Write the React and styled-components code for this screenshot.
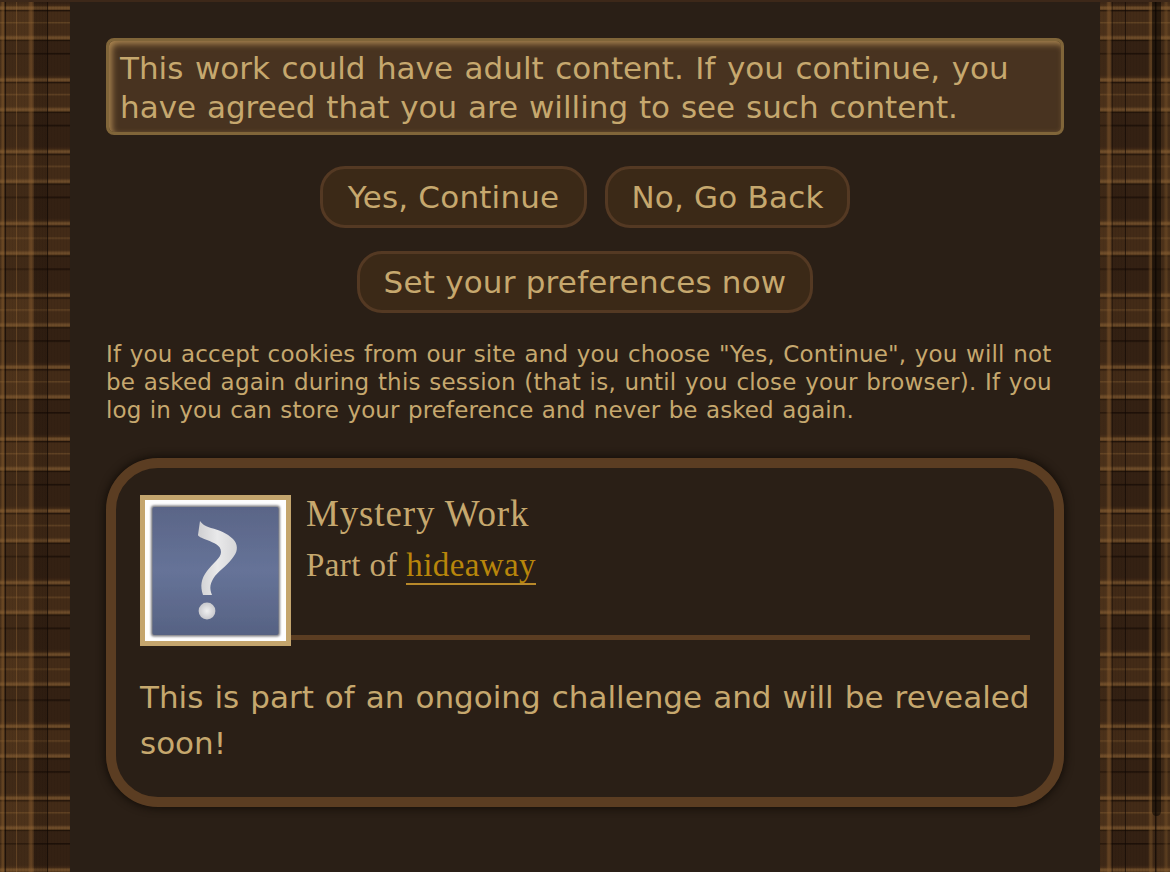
import React from 'react'
import styled, { createGlobalStyle } from 'styled-components'

const GlobalStyle = createGlobalStyle`
    * {
        box-sizing: border-box;
    }
    body {
        margin: 0;
        background: #352012;
        overflow: hidden;
    }
    p, h2, h3 {
        margin: 0;
        font-weight: 400;
    }
`

function App() {
    return (
        <Page>
            <GlobalStyle/>
            <Plaid/>
            <Main>
                <Notice>
                    <Line $word={1.7}>This work could have adult content. If you continue, you</Line>
                    <Line $word={1}>have agreed that you are willing to see such content.</Line>
                </Notice>
                <Actions>
                    <Button $width={267}>Yes, Continue</Button>
                    <Button $width={245}>No, Go Back</Button>
                    <Button $width={456}>Set your preferences now</Button>
                </Actions>
                <Footnote>
                    <Line $word={1} $letter={0.17}>If you accept cookies from our site and you choose "Yes, Continue", you will not</Line>
                    <Line $word={1} $letter={0.21}>be asked again during this session (that is, until you close your browser). If you</Line>
                    <Line $word={1} $letter={0.1}>log in you can store your preference and never be asked again.</Line>
                </Footnote>
                <Work>
                    <Header>
                        <Mystery/>
                        <Heading>
                            <Title>Mystery Work</Title>
                            <Part>Part of <a href="#hideaway">hideaway</a></Part>
                        </Heading>
                    </Header>
                    <Summary>
                        <Line $word={1.2}>This is part of an ongoing challenge and will be revealed</Line>
                        <Line>soon!</Line>
                    </Summary>
                </Work>
            </Main>
            <Plaid $right/>
            <Scrollbar/>
        </Page>
    )
}

function Mystery() {
    return (
        <Icon>
            <svg width="141" height="141" viewBox="0 0 141 141">
                <defs>
                    <linearGradient id="sky" x1="0" y1="0" x2="0" y2="1">
                        <stop offset="0" stopColor="#5a6587"/>
                        <stop offset=".5" stopColor="#667398"/>
                        <stop offset="1" stopColor="#566283"/>
                    </linearGradient>
                    <linearGradient id="mark" x1="0" y1="0" x2="1" y2="0">
                        <stop offset="0" stopColor="#cfcfd1"/>
                        <stop offset=".5" stopColor="#e9e9ea"/>
                        <stop offset="1" stopColor="#d6d6d8"/>
                    </linearGradient>
                    <radialGradient id="dot">
                        <stop offset="0" stopColor="#f0f0f0"/>
                        <stop offset="1" stopColor="#c9c9cd"/>
                    </radialGradient>
                    <filter id="edge">
                        <feGaussianBlur stdDeviation="1.1"/>
                    </filter>
                    <filter id="soft">
                        <feGaussianBlur stdDeviation=".6"/>
                    </filter>
                </defs>
                <rect width="141" height="141" fill="#fefefe"/>
                <rect x="6" y="5.500" width="129" height="131" rx="3" fill="#77777c" filter="url(#edge)"/>
                <rect x="7.500" y="7" width="126" height="128" rx="2" fill="url(#sky)" filter="url(#soft)"/>
                <path d="M55 21 C57 24 60 26 66 28 C74 30 82 33 88 39 C93 44 93 51 89 56 C84 64 76 69 70 76 C65 83 64 88 67 95 L58 95 C55 86 56 79 62 71 C68 63 76 58 76 52 C76 45 69 43 62 40 C56 38 53 36 53 35 Z" fill="url(#mark)" filter="url(#soft)"/>
                <circle cx="62" cy="111" r="8.400" fill="url(#dot)" filter="url(#soft)"/>
            </svg>
        </Icon>
    )
}

const Page = styled.div`
    display: flex;
    width: 1170px;
    height: 872px;
    overflow: hidden;
    position: relative;
    border-top: 2px solid #3d2819;
    background: #2a1f16;
    color: #c6a86e;
    font-family: "DejaVu Sans", Verdana, sans-serif;
`

const leftStripes = `linear-gradient(90deg,
    rgba(135, 93, 45, .25) 0 1px, rgba(135, 93, 45, .55) 2px 4px, rgba(15, 7, 3, .6) 5px 6px,
    rgba(135, 93, 45, .15) 6px 16px, rgba(150, 105, 55, .45) 16px 17px, rgba(135, 93, 45, .15) 17px 28px,
    rgba(140, 95, 48, .5) 30px 32px, rgba(135, 93, 45, .25) 33px 34px, rgba(24, 14, 7, .22) 34px 47px,
    rgba(15, 7, 3, .7) 47px 48px, transparent 48px)`

const rightStripes = `linear-gradient(90deg,
    rgba(135, 93, 45, .12) 0 6px, rgba(140, 95, 48, .5) 8px 10px, rgba(135, 93, 45, .3) 11px,
    rgba(15, 7, 3, .4) 12px 13px, rgba(24, 14, 7, .06) 13px 25px, rgba(15, 7, 3, .65) 25px 26px,
    transparent 26px 48px, rgba(135, 93, 45, .45) 50px 52px, rgba(135, 93, 45, .1) 53px 55px,
    rgba(15, 7, 3, .7) 55px 56px, rgba(135, 93, 45, .12) 57px 63px, rgba(135, 93, 45, .45) 66px 67px,
    rgba(135, 93, 45, .2) 68px 70px)`

const Plaid = styled.div`
    flex: 0 0 70px;
    background:
        ${p => p.$right ? rightStripes : leftStripes},
        repeating-linear-gradient(90deg, rgba(15, 7, 3, .06) 0 1px, transparent 1px 3px),
        linear-gradient(180deg,
            #50351b 0, #6c4b29 1.5px, #6c4b29 2.800px, #50351b 4px, #22140a 4.200px, #22140a 5.200px,
            #432b17 5.700px, #432b17 16px, #604223 16.200px, #604223 17.200px, #432b17 17.700px, #432b17 29px,
            #6c4b29 31px, #6c4b29 32.500px, #50351b 33.500px, #1f1208 34px, #1f1208 35px,
            #342113 35.500px, #342113 47px, #1d1008 47.200px, #1d1008 48.200px,
            #342113 48.700px, #342113 69px, #432b17 71.800px);
    background-size: auto, auto, 100% 71.830px;
    background-position: 0 0, 0 0, 0 4px;
`

const Main = styled.main`
    flex: 0 0 1030px;
    min-width: 0;
    padding: 36px 36px 0;
    background: #2a1f16;
`

const Line = styled.span`
    display: block;
    white-space: nowrap;
    word-spacing: ${p => p.$word || 0}px;
    letter-spacing: ${p => p.$letter || 0}px;
`

const Notice = styled.div`
    height: 97px;
    padding: 8px 11px;
    border: 3px solid #806539;
    border-radius: 8px;
    background: #483320;
    box-shadow: inset 3px 3px 6px #a8834f;
    font-size: 31px;
    line-height: 39px;
`

const Actions = styled.div`
    display: flex;
    flex-wrap: wrap;
    justify-content: center;
    gap: 23px 18px;
    margin: 31px 0 27px;
`

const Button = styled.button`
    width: ${p => p.$width}px;
    height: 62px;
    padding: 0;
    border: 3px solid #543923;
    border-radius: 25px;
    background: #3b2917;
    color: inherit;
    font: 31px "DejaVu Sans", Verdana, sans-serif;
    letter-spacing: .2px;
    white-space: nowrap;
`

const Footnote = styled.p`
    font-size: 23px;
    line-height: 28px;
`

const Work = styled.article`
    height: 349px;
    margin-top: 34px;
    padding: 27px 24px;
    border: 10px solid #5b3d22;
    border-radius: 52px;
    box-shadow: 0 0 8px 1px #120c07;
`

const Header = styled.header`
    display: flex;
    align-items: flex-start;
    height: 151px;
`

const Icon = styled.div`
    flex: 0 0 151px;
    height: 151px;
    border: 5px solid #c4a56d;
    svg {
        display: block;
    }
`

const Heading = styled.div`
    flex: 1;
    height: 145px;
    padding-left: 15px;
    border-bottom: 5px solid #5b3d22;
    font-family: Georgia, "Liberation Serif", serif;
`

const Title = styled.h2`
    font-size: 37px;
    line-height: 38px;
    letter-spacing: .85px;
`

const Part = styled.h3`
    margin-top: 12px;
    font-size: 33px;
    line-height: 40px;
    letter-spacing: .4px;
    a {
        padding-bottom: 2px;
        color: #b8860b;
        text-decoration: none;
        background: linear-gradient(#b8892a, #b8892a) 0 100% / 100% 2px no-repeat;
    }
`

const Summary = styled.p`
    margin-top: 28px;
    font-size: 31px;
    line-height: 46px;
`

const Scrollbar = styled.div`
    position: absolute;
    top: 0;
    left: 1152px;
    width: 9px;
    height: 814px;
    border-radius: 0 0 5px 5px;
    background: rgba(10, 5, 2, .55);
`

export default App
